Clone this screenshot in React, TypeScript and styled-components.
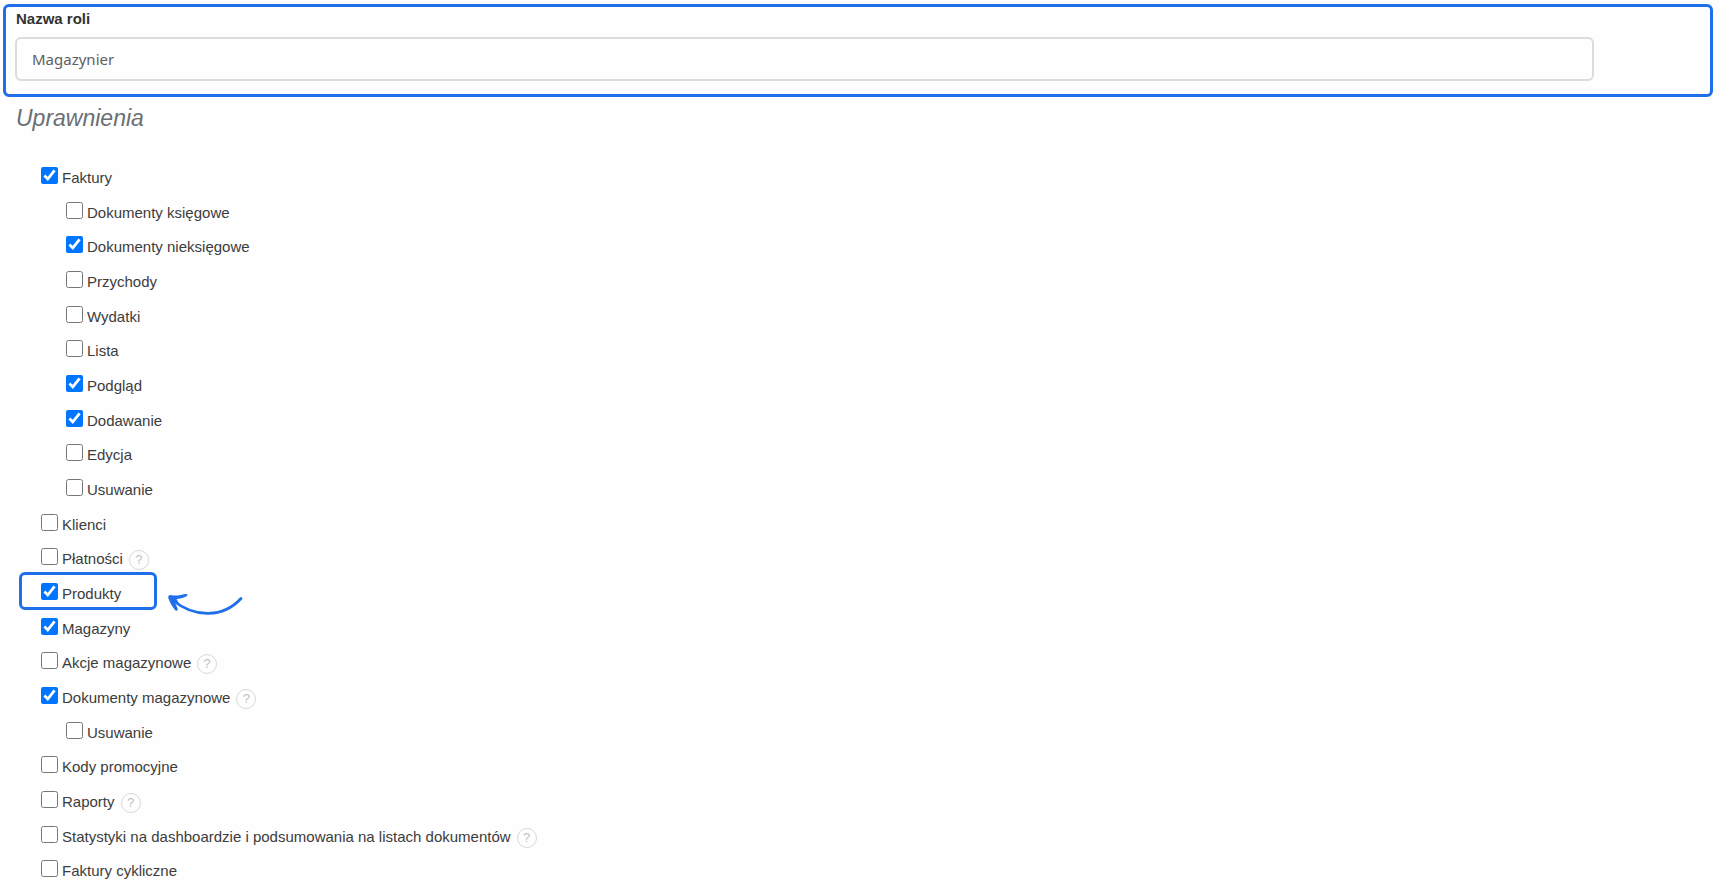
import React from 'react';
import styled, { createGlobalStyle } from 'styled-components';

const GlobalStyle = createGlobalStyle`
  *, *::before, *::after { box-sizing: border-box; }
  body {
    margin: 0;
    background: #fefefe;
    color: #3c3c3c;
    font-family: "Liberation Sans", Arial, sans-serif;
    font-size: 15px;
    line-height: 20px;
  }
`;

const Page = styled.main`
  padding: 4px 10px 10px 3px;
`;

const RoleField = styled.section`
  display: flex;
  flex-direction: column;
  gap: 8px;
  padding: 2px 116px 13px 9px;
  border: 3px solid #1f6feb;
  border-radius: 6px;
`;

const FieldLabel = styled.label`
  padding-left: 1px;
  font-weight: 700;
  color: #333;
`;

const TextInput = styled.input`
  width: 100%;
  height: 44px;
  padding: 0 15px;
  border: 2px solid #dcdcdc;
  border-radius: 6px;
  background: #fefefe;
  color: #606060;
  font-family: "Noto Sans", sans-serif;
  font-size: 15px;
  outline: none;
`;

const Heading = styled.h2`
  margin: 7px 0 34px 13px;
  font-size: 23px;
  line-height: 28px;
  font-style: italic;
  font-weight: 400;
  color: #6b6e72;
`;

const PermissionList = styled.ul`
  display: grid;
  grid-auto-rows: 35px 34px 35px;
  margin: 0;
  padding: 1px 0 0 38px;
  list-style: none;
`;

const PermissionRow = styled.li<{ $nested?: boolean }>`
  position: relative;
  display: flex;
  align-items: flex-start;
  padding-left: ${({ $nested }) => ($nested ? 25 : 0)}px;
`;

const Option = styled.label`
  display: flex;
  align-items: flex-start;
  gap: 4px;
  white-space: nowrap;
`;

const Checkbox = styled.input`
  flex: none;
  width: 17px;
  height: 17px;
  margin: 0;
`;

const OptionText = styled.span`
  padding-top: 1px;
`;

const HelpButton = styled.button`
  width: 20px;
  height: 20px;
  margin: 2px 0 0 6px;
  padding: 0;
  border: 1px solid #d8d8d8;
  border-radius: 50%;
  background: #fefefe;
  color: #c0c0c0;
  font-family: inherit;
  font-size: 13px;
  line-height: 18px;
  text-align: center;
`;

const Highlight = styled.span`
  position: absolute;
  top: -11px;
  left: -22px;
  width: 138px;
  height: 38px;
  border: 3px solid #1f6feb;
  border-radius: 6px;
  pointer-events: none;
`;

const Arrow = styled.svg`
  position: absolute;
  top: 8px;
  left: 124px;
  pointer-events: none;
`;

type Permission = {
  name: string;
  nested?: boolean;
  checked?: boolean;
  help?: boolean;
  highlighted?: boolean;
};

const permissions: Permission[] = [
  { name: 'Faktury', checked: true },
  { name: 'Dokumenty księgowe', nested: true },
  { name: 'Dokumenty nieksięgowe', nested: true, checked: true },
  { name: 'Przychody', nested: true },
  { name: 'Wydatki', nested: true },
  { name: 'Lista', nested: true },
  { name: 'Podgląd', nested: true, checked: true },
  { name: 'Dodawanie', nested: true, checked: true },
  { name: 'Edycja', nested: true },
  { name: 'Usuwanie', nested: true },
  { name: 'Klienci' },
  { name: 'Płatności', help: true },
  { name: 'Produkty', checked: true, highlighted: true },
  { name: 'Magazyny', checked: true },
  { name: 'Akcje magazynowe', help: true },
  { name: 'Dokumenty magazynowe', checked: true, help: true },
  { name: 'Usuwanie', nested: true },
  { name: 'Kody promocyjne' },
  { name: 'Raporty', help: true },
  { name: 'Statystyki na dashboardzie i podsumowania na listach dokumentów', help: true },
  { name: 'Faktury cykliczne' },
];

export default function App() {
  return (
    <Page>
      <GlobalStyle />
      <RoleField>
        <FieldLabel htmlFor="role-name">Nazwa roli</FieldLabel>
        <TextInput id="role-name" type="text" defaultValue="Magazynier" />
      </RoleField>
      <Heading>Uprawnienia</Heading>
      <PermissionList>
        {permissions.map((permission, index) => (
          <PermissionRow key={index} $nested={permission.nested}>
            <Option htmlFor={`permission-${index}`}>
              <Checkbox
                id={`permission-${index}`}
                type="checkbox"
                defaultChecked={permission.checked}
              />
              <OptionText>{permission.name}</OptionText>
            </Option>
            {permission.help && <HelpButton type="button">?</HelpButton>}
            {permission.highlighted && (
              <>
                <Highlight />
                <Arrow width="80" height="28" viewBox="0 0 80 28" fill="none" aria-hidden="true">
                  <path
                    d="M8 9.500C30 27 58 27 76 7.500"
                    stroke="#1f6feb"
                    strokeWidth="2.800"
                    strokeLinecap="round"
                  />
                  <path
                    d="M3.500 7.500C2.500 5.500 4 3.500 6.500 4.200C11 5 16 4.200 20.500 3C22.800 2.500 23 4.300 21.500 5.200C18 7.200 14.500 7.800 11.500 8L14 12.500L9.500 11.500C11 13.500 12 16 12.800 18C13 20.200 10.800 20 10 19C7 15.500 5 11.500 3.500 7.500Z"
                    fill="#1f6feb"
                  />
                </Arrow>
              </>
            )}
          </PermissionRow>
        ))}
      </PermissionList>
    </Page>
  );
}
